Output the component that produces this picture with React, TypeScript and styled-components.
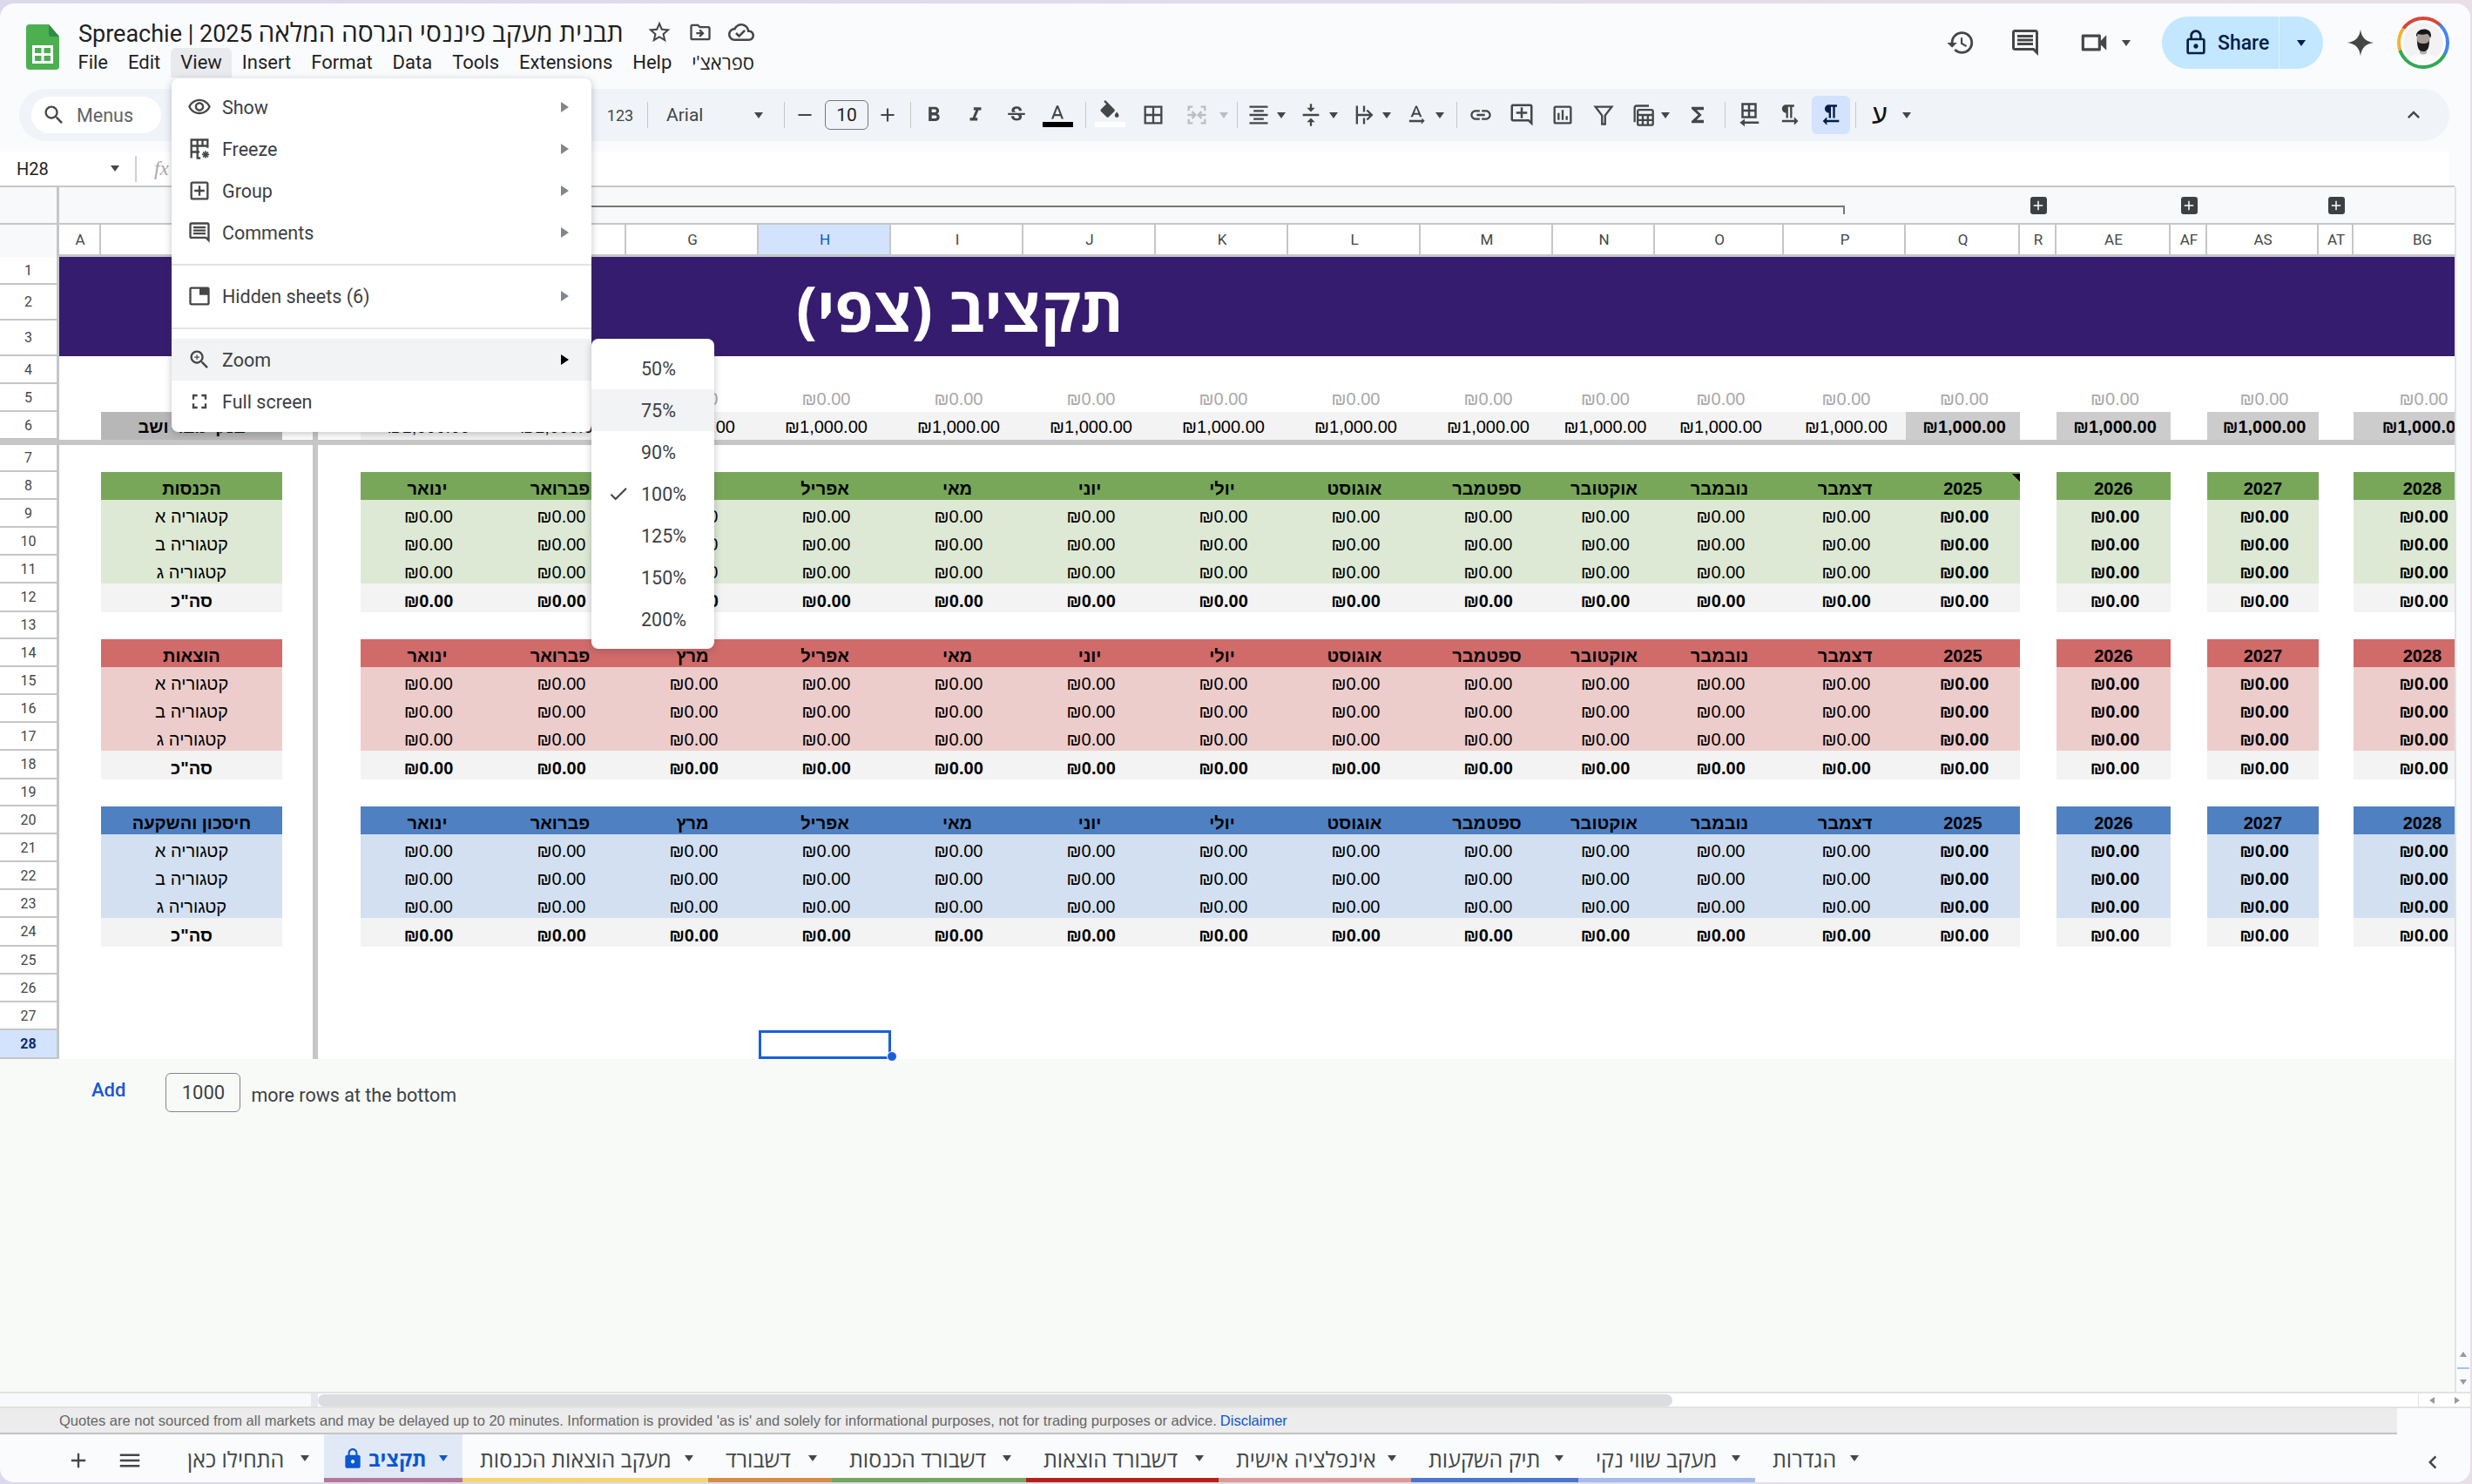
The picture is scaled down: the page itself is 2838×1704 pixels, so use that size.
import React from "react"
import styled, { createGlobalStyle } from "styled-components"

const UI_FONT = `Roboto, "Open Sans", "Liberation Sans", sans-serif`
const SHEET_FONT = `"Liberation Sans", Arial, sans-serif`
const GRID_LINE = "#c4c7c5"
const ICON_DARK = "#444746"

const GlobalStyle = createGlobalStyle`
	html, body {
		margin: 0;
		padding: 0;
		width: 2838px;
		height: 1704px;
		overflow: hidden;
		background: linear-gradient(90deg, #dcd9ec 0%, #e2dcea 55%, #e9dfe6 100%);
		font-family: ${UI_FONT};
	}
	* {
		box-sizing: border-box;
	}
`

const Shell = styled.div`
	width: 2838px;
	height: 1704px;
	padding: 4px 2px 2px 0;
`
const Window = styled.div`
	position: relative;
	height: 1698px;
	display: flex;
	flex-direction: column;
	background: #f9fbfd;
	border-radius: 16px;
	overflow: hidden;
`

/* header */
const Header = styled.header`
	height: 98px;
	flex: none;
	display: flex;
	padding-top: 17px;
`
const LogoSlot = styled.div`
	width: 90px;
	flex: none;
	padding: 7px 0 0 30px;
`
const TitleStack = styled.div`
	display: flex;
	flex-direction: column;
`
const TitleRow = styled.div`
	height: 34px;
	padding-bottom: 3px;
	display: flex;
	align-items: center;
`
const DocTitle = styled.div`
	font-size: 27px;
	color: #1f1f1f;
	white-space: nowrap;
	margin-right: 18px;
`
const TitleHebrew = styled.span`
	font-size: 29.9px;
`
const TitleIcon = styled.div`
	width: 47px;
	display: flex;
	justify-content: center;
`
const MenuBar = styled.nav`
	height: 34px;
	display: flex;
	margin-left: -12px;
`
const MenuItem = styled.div<{ $open?: boolean }>`
	height: 34px;
	padding: 0 11.5px 2px;
	display: flex;
	align-items: center;
	font-size: 22px;
	color: #1f1f1f;
	border-radius: 6px 6px 0 0;
	background: ${p => (p.$open ? "#e8eaed" : "transparent")};
`
const Actions = styled.div`
	margin-left: auto;
	padding-right: 24px;
	display: flex;
	height: 60px;
	margin-top: -2px;
	align-items: center;
`
const ActionIcon = styled.div<{ $w: number }>`
	width: ${p => p.$w}px;
	display: flex;
	justify-content: center;
	align-items: center;
`
const VideoButton = styled.div`
	width: 120px;
	padding-left: 23px;
	display: flex;
	align-items: center;
	gap: 13px;
`
const SharePill = styled.div`
	width: 185px;
	height: 60px;
	display: flex;
	border-radius: 30px;
	background: #c2e7ff;
	color: #041e49;
`
const ShareMain = styled.div`
	width: 135px;
	padding-left: 23px;
	display: flex;
	align-items: center;
	gap: 9px;
	font-size: 23px;
	font-weight: 500;
	border-right: 1px solid #e3f3ff;
`
const ShareCaret = styled.div`
	flex: 1;
	display: flex;
	justify-content: center;
	align-items: center;
`
const AvatarRing = styled.div`
	width: 60px;
	height: 60px;
	padding: 4px;
	border-radius: 50%;
	background: conic-gradient(#db4437 0 12%, #4285f4 12% 33%, #34a853 33% 70%, #f5b133 70% 85%, #db4437 85% 100%);
`
const AvatarFace = styled.div`
	width: 52px;
	height: 52px;
	border-radius: 50%;
	border: 3px solid #fff;
	background: #f2f2f2;
	overflow: hidden;
`

/* toolbar */
const Toolbar = styled.div`
	height: 60px;
	flex: none;
	margin: 0 24px 0 22px;
	padding-left: 14px;
	display: flex;
	align-items: center;
	background: #f0f4f9;
	border-radius: 30px;
`
const SearchPill = styled.div`
	width: 149px;
	height: 42px;
	flex: none;
	padding-left: 12px;
	display: flex;
	align-items: center;
	gap: 12px;
	background: #fff;
	border-radius: 21px;
	font-size: 21.5px;
	color: #5f6368;
`
const HiddenTools = styled.div`
	width: 506px;
	flex: none;
`
const Tool = styled.div<{ $w: number; $active?: boolean; $pt?: number }>`
	width: ${p => p.$w}px;
	height: 44px;
	flex: none;
	padding-top: ${p => p.$pt || 0}px;
	display: flex;
	align-items: ${p => (p.$pt ? "flex-start" : "center")};
	justify-content: center;
	position: relative;
	border-radius: 6px;
	background: ${p => (p.$active ? "#d3e3fd" : "transparent")};
	color: ${ICON_DARK};
`
const CaretTool = styled.div<{ $w: number; $pl: number; $gap: number }>`
	width: ${p => p.$w}px;
	height: 44px;
	flex: none;
	padding-left: ${p => p.$pl}px;
	display: flex;
	align-items: center;
	gap: ${p => p.$gap}px;
`
const ToolSep = styled.div<{ $w: number }>`
	width: ${p => p.$w}px;
	flex: none;
	display: flex;
	justify-content: center;
	&::after {
		content: "";
		width: 1px;
		height: 30px;
		background: #c7c7c7;
	}
`
const FormatLabel = styled.span`
	font-size: 18px;
	color: ${ICON_DARK};
`
const FontPicker = styled.div`
	width: 132px;
	flex: none;
	padding: 0 9px 0 12px;
	display: flex;
	justify-content: space-between;
	align-items: center;
	font-size: 21px;
	color: ${ICON_DARK};
`
const FontSizeBox = styled.div`
	width: 50px;
	height: 34px;
	flex: none;
	margin-left: 14px;
	display: flex;
	align-items: center;
	justify-content: center;
	border: 1px solid #747775;
	border-radius: 6px;
	font-size: 21px;
	color: #1f1f1f;
`
const ColorBar = styled.span<{ $color: string }>`
	position: absolute;
	left: 50%;
	bottom: 8px;
	width: 35px;
	height: 6px;
	margin-left: -17px;
	background: ${p => p.$color};
`
const DirectionGlyph = styled.span`
	width: 28px;
	text-align: center;
	font-family: ${SHEET_FONT};
	font-size: 31px;
	color: #111;
`
const Collapse = styled(Tool)`
	margin-left: auto;
	margin-right: 21px;
`

/* formula bar */
const FormulaBar = styled.div`
	width: 2812px;
	height: 41px;
	flex: none;
	margin-top: 12px;
	padding: 0 0 2px 19px;
	display: flex;
	align-items: center;
	background: #fff;
`
const NameBox = styled.div`
	width: 118px;
	display: flex;
	justify-content: space-between;
	align-items: center;
	font-size: 20px;
	color: #1f1f1f;
`
const FormulaSep = styled.div`
	width: 2px;
	height: 30px;
	margin: 0 20px 0 18px;
	background: #d0d0d0;
`
const FxMark = styled.span`
	font-family: "Liberation Serif", serif;
	font-style: italic;
	font-size: 23px;
	color: #a8a8a8;
`

/* sheet */
const Workspace = styled.div`
	height: 1383px;
	flex: none;
	display: flex;
`
const SheetColumn = styled.div`
	width: 2818px;
	flex: none;
	display: flex;
	flex-direction: column;
`
const SheetGrid = styled.div<{ $cols: string; $rows: string }>`
	height: 1003px;
	flex: none;
	display: grid;
	grid-template-columns: ${p => p.$cols};
	grid-template-rows: ${p => p.$rows};
	overflow-x: clip;
	background: #f8f9fa;
	border-top: 2px solid ${GRID_LINE};
	margin-top: -2px;
	font-family: ${SHEET_FONT};
`
const Corner = styled.div<{ $line?: boolean }>`
	background: #f8f9fa;
	border-right: 3px solid ${GRID_LINE};
	border-bottom: ${p => (p.$line ? `2px solid ${GRID_LINE}` : "none")};
`
const GroupFill = styled.div<{ $span: number }>`
	grid-column: span ${p => p.$span};
	background: #f8f9fa;
	border-bottom: 2px solid ${GRID_LINE};
	display: flex;
	justify-content: center;
	align-items: center;
`
const GroupBracket = styled.div`
	grid-column: span 11;
	background: #f8f9fa;
	border-bottom: 2px solid ${GRID_LINE};
	padding: 21px 70px 0 0;
`
const BracketLine = styled.div`
	height: 10px;
	border-top: 2px solid #777;
	border-right: 2px solid #777;
`
const GroupPlus = styled.div`
	width: 19px;
	height: 20px;
	display: flex;
	align-items: center;
	justify-content: center;
	border-radius: 3px;
	background: #3c4043;
`
const ColHead = styled.div<{ $active?: boolean }>`
	display: flex;
	align-items: center;
	justify-content: center;
	padding-left: 2px;
	font-family: ${UI_FONT};
	font-size: 17px;
	color: ${p => (p.$active ? "#0b57d0" : "#444746")};
	background: ${p => (p.$active ? "#d3e3fd" : "#fff")};
	border-right: 2px solid ${GRID_LINE};
	border-bottom: 3px solid ${GRID_LINE};
	overflow: hidden;
`
const RowHead = styled.div<{ $active?: boolean }>`
	display: flex;
	align-items: center;
	justify-content: center;
	font-family: ${UI_FONT};
	font-size: 16px;
	font-weight: ${p => (p.$active ? 700 : 400)};
	color: ${p => (p.$active ? "#0b2b6e" : "#444746")};
	background: ${p => (p.$active ? "#d3e3fd" : "#fff")};
	border-right: 3px solid ${GRID_LINE};
	border-bottom: 2px solid ${GRID_LINE};
`
const Banner = styled.div`
	grid-column: 2 / -1;
	grid-row: span 3;
	padding-left: 846px;
	display: flex;
	align-items: center;
	background: #351c6e;
`
const BannerText = styled.span`
	font-family: "Open Sans", "Liberation Sans", sans-serif;
	font-size: 71px;
	font-weight: 700;
	color: #fff;
	white-space: nowrap;
	line-height: 1;
	padding-top: 2px;
`
const FreezeBar = styled.div`
	grid-column: 1 / -1;
	background: #c6c6c6;
`
const Cell = styled.div<{ $bg?: string; $bold?: boolean; $color?: string; $freeze?: boolean; $num?: boolean; $up?: boolean }>`
	position: relative;
	padding: 0 0 ${p => (p.$up ? 2 : 0)}px ${p => (p.$num ? 3 : 0)}px;
	display: flex;
	align-items: flex-end;
	justify-content: center;
	white-space: nowrap;
	overflow: hidden;
	font-size: 20px;
	line-height: 26px;
	font-weight: ${p => (p.$bold ? 700 : 400)};
	color: ${p => p.$color || "#000"};
	background: ${p => p.$bg || "#fff"};
	border-right: ${p => (p.$freeze ? `6px solid #c6c6c6` : "none")};
`
const NoteMark = styled.span`
	position: absolute;
	top: 2px;
	right: 0;
	border-style: solid;
	border-width: 0 9px 9px 0;
	border-color: transparent #000 transparent transparent;
`
const SelectedCell = styled.div`
	position: relative;
	z-index: 2;
	background: #fff;
	border: 3px solid #1a5fd8;
`
const FillHandle = styled.span`
	position: absolute;
	right: -10px;
	bottom: -6px;
	width: 12px;
	height: 12px;
	border-radius: 50%;
	background: #1a5fd8;
	border: 1px solid #fff;
`
const AddRows = styled.div`
	flex: 1;
	padding: 16px 0 0 105px;
	display: flex;
	align-items: flex-start;
	background: #f8faf7;
	font-size: 21.5px;
`
const AddLink = styled.span`
	line-height: 40px;
	font-size: 22px;
	font-weight: 500;
	color: #1a56d6;
`
const AddCount = styled.div`
	width: 86px;
	height: 45px;
	margin-left: 46px;
	display: flex;
	align-items: center;
	justify-content: center;
	border: 1px solid #80868b;
	border-radius: 6px;
	font-size: 22px;
	color: #3c4043;
`
const AddHint = styled.span`
	margin-left: 12px;
	line-height: 52px;
	color: #3c4043;
`
const VScroll = styled.div`
	width: 18px;
	flex: none;
	display: flex;
	flex-direction: column;
	align-items: center;
	justify-content: flex-end;
	gap: 12px;
	padding-bottom: 8px;
	border-left: 2px solid #e1e3e1;
`
const VScrollMark = styled.div`
	width: 14px;
	height: 2px;
	background: #a8c0ef;
`
const ScrollRow = styled.div`
	height: 19px;
	flex: none;
	display: flex;
	background: #fff;
	border-top: 2px solid #e1e3e1;
	border-bottom: 2px solid #e1e3e1;
`
const FrozenScroll = styled.div`
	width: 365px;
	flex: none;
	background: #f8f9fa;
	border-right: 8px solid #e6e8ef;
`
const ScrollTrack = styled.div`
	flex: 1;
	padding-top: 1px;
`
const ScrollThumb = styled.div`
	width: 1555px;
	height: 14px;
	border-radius: 7px;
	background: #dadce0;
`
const ScrollArrows = styled.div`
	width: 60px;
	flex: none;
	display: flex;
	align-items: center;
	justify-content: space-around;
	border-left: 1px solid #e1e3e1;
`

/* quotes and tabs */
const QuoteBar = styled.div`
	width: 2752px;
	height: 30px;
	flex: none;
	padding-left: 68px;
	display: flex;
	align-items: center;
	gap: 4px;
	background: #ececec;
	border-bottom: 2px solid #c4c4c4;
	font-family: ${SHEET_FONT};
	font-size: 16.5px;
	color: #666;
	white-space: nowrap;
`
const QuoteLink = styled.span`
	color: #1155cc;
`
const TabBar = styled.div`
	height: 55px;
	flex: none;
	display: flex;
	align-items: stretch;
`
const TabTool = styled.div<{ $w: number; $pl?: number }>`
	width: ${p => p.$w}px;
	flex: none;
	padding: 5px 0 0 ${p => p.$pl || 0}px;
	display: flex;
	align-items: center;
	justify-content: center;
`
const Tab = styled.div<{ $w: number; $strip?: string; $active?: boolean; $pl?: number }>`
	width: ${p => p.$w}px;
	flex: none;
	padding: 5px 17px 0 ${p => p.$pl || 20}px;
	display: flex;
	align-items: center;
	justify-content: space-between;
	font-family: "Open Sans", "Liberation Sans", sans-serif;
	font-size: ${p => (p.$active ? 23.5 : 25)}px;
	font-weight: ${p => (p.$active ? 700 : 400)};
	white-space: nowrap;
	color: ${p => (p.$active ? "#0b57d0" : "#444746")};
	background: ${p => (p.$active ? "#e1e9f7" : "transparent")};
	border-bottom: 5px solid ${p => p.$strip || "transparent"};
`
const TabLabel = styled.span`
	display: flex;
	align-items: center;
	gap: 5px;
`
const TabChevron = styled.div`
	margin-left: auto;
	margin-right: 28px;
	display: flex;
	align-items: center;
	padding-top: 8px;
`

/* view menu */
const MenuPanel = styled.div`
	position: absolute;
	top: 86px;
	left: 197px;
	width: 482px;
	padding: 9px 0 11px;
	background: #fff;
	border-radius: 8px;
	box-shadow: 0 2px 8px rgba(60, 64, 67, 0.3);
	z-index: 5;
`
const MenuRow = styled.div<{ $hover?: boolean }>`
	position: relative;
	height: 48px;
	padding: 0 26px 0 18px;
	display: flex;
	align-items: center;
	gap: 12px;
	font-size: 21.5px;
	color: #3c4043;
	background: ${p => (p.$hover ? "#f1f3f4" : "transparent")};
`
const MenuDivider = styled.div`
	height: 2px;
	margin: 11.5px 0;
	background: #e3e3e3;
`
const MenuArrow = styled.span<{ $dark?: boolean }>`
	margin-left: auto;
	border-style: solid;
	border-width: 6px 0 6px 9px;
	border-color: transparent transparent transparent ${p => (p.$dark ? "#000" : "#80868b")};
`
const SubMenu = styled.div`
	position: absolute;
	top: 0;
	left: 100%;
	width: 141px;
	padding: 10px 0;
	background: #fff;
	border-radius: 8px;
	box-shadow: 0 2px 8px rgba(60, 64, 67, 0.3);
`
const SubRow = styled.div<{ $hover?: boolean }>`
	height: 48px;
	display: flex;
	align-items: center;
	font-size: 21.5px;
	color: #3c4043;
	background: ${p => (p.$hover ? "#f1f3f4" : "transparent")};
`
const CheckSlot = styled.div`
	width: 57px;
	padding-left: 18px;
	display: flex;
	align-items: center;
`
const Caret = styled.span<{ $color?: string; $muted?: boolean }>`
	flex: none;
	width: 0;
	height: 0;
	border-style: solid;
	border-width: 7px 5.5px 0 5.5px;
	border-color: ${p => (p.$muted ? "#bdbdbd" : p.$color || ICON_DARK)} transparent transparent transparent;
`
const ScrollNub = styled.span<{ $dir: "up" | "down" | "left" | "right" }>`
	width: 0;
	height: 0;
	border-style: solid;
	border-color: transparent;
	${p => (p.$dir === "up" ? "border-width: 0 4px 6px; border-bottom-color: #999;" : "")}
	${p => (p.$dir === "down" ? "border-width: 6px 4px 0; border-top-color: #999;" : "")}
	${p => (p.$dir === "left" ? "border-width: 4px 6px 4px 0; border-right-color: #999;" : "")}
	${p => (p.$dir === "right" ? "border-width: 4px 0 4px 6px; border-left-color: #999;" : "")}
`
const Glyph = styled.svg<{ $color?: string }>`
	flex: none;
	display: block;
	fill: ${p => p.$color || ICON_DARK};
`
const StrokeGlyph = styled.svg<{ $color?: string }>`
	flex: none;
	display: block;
	fill: none;
	stroke: ${p => p.$color || ICON_DARK};
	stroke-width: 2;
`

const I = {
	star: "M22 9.24l-7.19-.62L12 2 9.19 8.63 2 9.24l5.46 4.73L5.82 21 12 17.27 18.18 21l-1.63-7.03L22 9.24zM12 15.4l-3.76 2.27 1-4.28-3.32-2.88 4.38-.38L12 6.1l1.71 4.04 4.38.38-3.32 2.88 1 4.28L12 15.4z",
	move: "M20 6h-8l-2-2H4c-1.1 0-2 .9-2 2v12c0 1.1.9 2 2 2h16c1.1 0 2-.9 2-2V8c0-1.1-.9-2-2-2zm0 12H4V6h5.17l2 2H20v10zm-8.01-9l-1.41 1.41L12.16 12H8v2h4.16l-1.59 1.59L11.99 17 16 13.01 11.99 9z",
	cloud: "M19.35 10.04C18.67 6.59 15.64 4 12 4 9.11 4 6.6 5.64 5.35 8.04 2.34 8.36 0 10.91 0 14c0 3.31 2.69 6 6 6h13c2.76 0 5-2.24 5-5 0-2.64-2.05-4.78-4.65-4.96zM19 18H6c-2.21 0-4-1.79-4-4 0-2.05 1.53-3.76 3.56-3.97l1.07-.11.5-.95C8.08 7.14 9.94 6 12 6c2.62 0 4.88 1.86 5.39 4.43l.3 1.5 1.53.11c1.56.1 2.78 1.41 2.78 2.96 0 1.65-1.35 3-3 3zm-9-3.82l-2.09-2.09L6.5 13.5 10 17l6.01-6.01-1.41-1.41z",
	search: "M15.5 14h-.79l-.28-.27C15.41 12.59 16 11.11 16 9.5 16 5.91 13.09 3 9.5 3S3 5.91 3 9.5 5.91 16 9.5 16c1.61 0 3.09-.59 4.23-1.57l.27.28v.79l5 4.99L20.49 19l-4.99-5zm-6 0C7.01 14 5 11.99 5 9.5S7.01 5 9.5 5 14 7.01 14 9.5 11.99 14 9.5 14z",
	history: "M13 3a9 9 0 0 0-9 9H1l3.89 3.89.07.14L9 12H6c0-3.87 3.13-7 7-7s7 3.13 7 7-3.13 7-7 7c-1.93 0-3.68-.79-4.94-2.06l-1.42 1.42A8.954 8.954 0 0 0 13 21a9 9 0 0 0 0-18zm-1 5v5l4.28 2.54.72-1.21-3.5-2.08V8H12z",
	comment: "M21.99 4c0-1.1-.89-2-1.99-2H4c-1.1 0-2 .9-2 2v12c0 1.1.9 2 2 2h14l4 4-.01-18zM20 4v13.17L18.83 16H4V4h16zM6 12h12v2H6zm0-3h12v2H6zm0-3h12v2H6z",
	video: "M15 8v8H5V8h10m1-2H4c-.55 0-1 .45-1 1v10c0 .55.45 1 1 1h12c.55 0 1-.45 1-1v-3.5l4 4v-11l-4 4V7c0-.55-.45-1-1-1z",
	lockOutline: "M18 8h-1V6c0-2.76-2.24-5-5-5S7 3.24 7 6v2H6c-1.1 0-2 .9-2 2v10c0 1.1.9 2 2 2h12c1.1 0 2-.9 2-2V10c0-1.1-.9-2-2-2zM9 6c0-1.66 1.34-3 3-3s3 1.34 3 3v2H9V6zm9 14H6V10h12v10zm-6-3c1.1 0 2-.9 2-2s-.9-2-2-2-2 .9-2 2 .9 2 2 2z",
	lock: "M18 8h-1V6c0-2.76-2.24-5-5-5S7 3.24 7 6v2H6c-1.1 0-2 .9-2 2v10c0 1.1.9 2 2 2h12c1.1 0 2-.9 2-2V10c0-1.1-.9-2-2-2zm-6 9c-1.1 0-2-.9-2-2s.9-2 2-2 2 .9 2 2-.9 2-2 2zm3.1-9H8.9V6c0-1.71 1.39-3.1 3.1-3.1 1.71 0 3.1 1.39 3.1 3.1v2z",
	spark: "M12 1C12.6 7.6 16.4 11.4 23 12 16.4 12.6 12.6 16.4 12 23 11.4 16.4 7.6 12.6 1 12 7.6 11.4 11.4 7.6 12 1z",
	bold: "M15.6 10.79c.97-.67 1.65-1.77 1.65-2.79 0-2.26-1.75-4-4-4H7v14h7.04c2.09 0 3.71-1.7 3.71-3.79 0-1.52-.86-2.82-2.15-3.42zM10 6.5h3c.83 0 1.5.67 1.5 1.5s-.67 1.5-1.5 1.5h-3v-3zm3.5 9H10v-3h3.5c.83 0 1.5.67 1.5 1.5s-.67 1.5-1.5 1.5z",
	italic: "M10 4v3h2.21l-3.42 8H6v3h8v-3h-2.21l3.42-8H18V4z",
	strike: "M6.85 7.08C6.85 4.37 9.45 3 12.24 3c1.64 0 3 .49 3.9 1.28.77.65 1.46 1.73 1.46 3.24h-3.01c0-.31-.05-.59-.15-.85-.29-.86-1.2-1.28-2.25-1.28-1.86 0-2.34.98-2.34 1.7 0 .48.25.88.74 1.21.38.25.77.48 1.41.7H7.39c-.21-.34-.54-.89-.54-1.92zM21 12v-2H3v2h9.62c1.15.45 1.96.75 1.96 1.97 0 1-.81 1.67-2.28 1.67-1.54 0-2.93-.54-2.93-2.51H6.4c0 .55.08 1.13.24 1.58.81 2.29 3.29 3.3 5.67 3.3 2.27 0 5.3-.89 5.3-4.05 0-.3-.01-1.16-.48-1.94H21V12z",
	textA: "M11 3 5.500 17h2.250l1.120-3h6.250l1.120 3h2.250L13 3h-2zm-1.380 9L12 5.670 14.380 12H9.620z",
	fill: "M16.56 8.94L7.62 0 6.21 1.41l2.38 2.38-5.15 5.15c-.59.59-.59 1.54 0 2.12l5.5 5.5c.29.29.68.44 1.06.44s.77-.15 1.06-.44l5.5-5.5c.59-.58.59-1.53 0-2.12zM19 11.5s-2 2.17-2 3.5c0 1.1.9 2 2 2s2-.9 2-2c0-1.33-2-3.5-2-3.5z",
	borders: "M3 3v18h18V3H3zm8 16H5v-6h6v6zm0-8H5V5h6v6zm8 8h-6v-6h6v6zm0-8h-6V5h6v6z",
	merge: "M3 3h5v2H5v3H3V3zm13 0h5v5h-2V5h-3V3zM3 16h2v3h3v2H3v-5zm16 0h2v5h-5v-2h3v-3zM3 11h5.200L6.600 9.400 8 8l4 4-4 4-1.400-1.400 1.600-1.600H3v-2zm18 2h-5.200l1.600 1.600L16 16l-4-4 4-4 1.400 1.400-1.600 1.600H21v2z",
	alignCenter: "M7 15v2h10v-2H7zm-4 6h18v-2H3v2zm0-8h18v-2H3v2zm4-6v2h10V7H7zM3 3v2h18V3H3z",
	valign: "M8 19h3v4h2v-4h3l-4-4-4 4zm8-14h-3V1h-2v4H8l4 4 4-4zM4 11v2h16v-2H4z",
	wrap: "M4 3h2v18H4zM11 3h2v6h-2zM11 15h2v6h-2zM6 11h11.200l-3-3L15.600 6.600 21 12l-5.400 5.400-1.400-1.400 3-3H6z",
	rotate: "M12.75 3h-1.5L6.5 14h2.1l.9-2.2h5l.9 2.2h2.1L12.75 3zm-2.62 7L12 4.98 13.87 10h-3.74zm10.37 8l-3-3v2H5v2h12v2l3-3z",
	link: "M3.9 12c0-1.71 1.39-3.1 3.1-3.1h4V7H7c-2.76 0-5 2.24-5 5s2.24 5 5 5h4v-1.9H7c-1.71 0-3.1-1.39-3.1-3.1zM8 13h8v-2H8v2zm9-6h-4v1.9h4c1.71 0 3.1 1.39 3.1 3.1s-1.39 3.1-3.1 3.1h-4V17h4c2.76 0 5-2.24 5-5s-2.24-5-5-5z",
	addComment: "M22 4c0-1.1-.9-2-2-2H4c-1.1 0-2 .9-2 2v12c0 1.1.9 2 2 2h14l4 4V4zm-2 13.17L18.83 16H4V4h16v13.17zM13 5h-2v4H7v2h4v4h2v-4h4V9h-4z",
	chart: "M19 3H5c-1.1 0-2 .9-2 2v14c0 1.1.9 2 2 2h14c1.1 0 2-.9 2-2V5c0-1.1-.9-2-2-2zm0 16H5V5h14v14zM7 10h2v7H7zm4-3h2v10h-2zm4 6h2v4h-2z",
	sigma: "M18 4H6v2l6.5 6L6 18v2h12v-3h-7l5-5-5-5h7V4z",
	ltr: "M9 10v5h2V4h2v11h2V4h2V2H9C6.79 2 5 3.79 5 6s1.79 4 4 4zm12 8l-4-4v3H5v2h12v3l4-4z",
	rtl: "M10 10v5h2V4h2v11h2V4h2V2h-8C7.79 2 6 3.79 6 6s1.79 4 4 4zm-2 7v-3l-4 4 4 4v-3h12v-2H8z",
	eye: "M12 6c3.79 0 7.17 2.13 8.82 5.5C19.17 14.87 15.79 17 12 17s-7.17-2.13-8.82-5.5C4.83 8.13 8.21 6 12 6m0-2C7 4 2.73 7.11 1 11.5 2.73 15.89 7 19 12 19s9.27-3.11 11-7.5C21.27 7.11 17 4 12 4zm0 5c1.38 0 2.5 1.12 2.5 2.5S13.38 14 12 14s-2.5-1.12-2.5-2.5S10.62 9 12 9m0-2c-2.48 0-4.5 2.02-4.5 4.5S9.52 16 12 16s4.5-2.02 4.5-4.5S14.48 7 12 7z",
	group: "M19 3H5c-1.1 0-2 .9-2 2v14c0 1.1.9 2 2 2h14c1.1 0 2-.9 2-2V5c0-1.1-.9-2-2-2zm0 16H5V5h14v14zM11 7h2v4h4v2h-4v4h-2v-4H7v-2h4z",
	sheets: "M4 3h16a2 2 0 0 1 2 2v14a2 2 0 0 1-2 2H4a2 2 0 0 1-2-2V5a2 2 0 0 1 2-2zm0 2v14h16v-8h-8V5H4z",
	zoomIn: "M15.5 14h-.79l-.28-.27C15.41 12.59 16 11.11 16 9.5 16 5.91 13.09 3 9.5 3S3 5.91 3 9.5 5.91 16 9.5 16c1.61 0 3.09-.59 4.23-1.57l.27.28v.79l5 4.99L20.49 19l-4.99-5zm-6 0C7.01 14 5 11.99 5 9.5S7.01 5 9.5 5 14 7.01 14 9.5 11.99 14 9.5 14zm.5-7H9v2H7v1h2v2h1v-2h2V9h-2z",
	fullscreen: "M7 14H5v5h5v-2H7v-3zm-2-4h2V7h3V5H5v5zm12 7h-3v2h5v-5h-2v3zM14 5v2h3v3h2V5h-5z",
	check: "M9 16.2 4.8 12l-1.4 1.4L9 19 21 7l-1.4-1.4z",
	plus: "M19 13h-6v6h-2v-6H5v-2h6V5h2v6h6v2z",
	minus: "M19 13H5v-2h14v2z",
	menu: "M3 18h18v-2H3v2zm0-5h18v-2H3v2zm0-7v2h18V6H3z",
	up: "M7.41 15.41 12 10.83l4.59 4.58L18 14l-6-6-6 6z",
	back: "M15.41 7.41 14 6l-6 6 6 6 1.41-1.41L10.83 12z"
}

const Icon = ({ d, size = 28, color }: { d: string; size?: number; color?: string }) => (
	<Glyph viewBox="0 0 24 24" width={size} height={size} $color={color}>
		<path d={d} />
	</Glyph>
)

const FreezeIcon = ({ size = 28 }: { size?: number }) => (
	<StrokeGlyph viewBox="0 0 24 24" width={size} height={size}>
		<path d="M4 21V3h16v8M4 9h16M4 15h8M10 3v18h3M15 3v6" />
		<path d="M14.5 17.5h7M18 14v7M15.5 15l5 5M20.5 15l-5 5" strokeWidth="1.4" />
	</StrokeGlyph>
)
const FilterIcon = () => (
	<StrokeGlyph viewBox="0 0 24 24" width={28} height={28}>
		<path d="M4 4h16l-6.5 8.5V21h-3v-8.500z" />
	</StrokeGlyph>
)
const PivotIcon = () => (
	<StrokeGlyph viewBox="0 0 24 24" width={28} height={28}>
		<path d="M4 19V5a2 2 0 0 1 2-2h12" />
		<rect x="7" y="7" width="15" height="15" rx="1.500" />
		<path d="M7 12h15M7 17h15M12 12v10M17 12v10" />
	</StrokeGlyph>
)
const SheetDirectionIcon = () => (
	<Glyph viewBox="0 0 24 24" width={30} height={30}>
		<path d="M5 1h14v14H5V1zm2 2v4h4V3H7zm6 0v4h4V3h-4zM7 9v4h4V9H7zm6 0v4h4V9h-4z" />
		<path d="M8 18v-2.500L3.500 19 8 22.500V20h13v-2z" />
	</Glyph>
)
const SheetsLogo = () => (
	<svg viewBox="0 0 38 52" width={38} height={52}>
		<path d="M4 0h22l12 14v34a4 4 0 0 1-4 4H4a4 4 0 0 1-4-4V4a4 4 0 0 1 4-4z" fill="#4caf50" />
		<path d="M26 0l12 14H28a2 2 0 0 1-2-2z" fill="#2e8b47" />
		<path d="M7 24h24v21H7V24zm3 3v6h7.500v-6H10zm10.500 0v6H28v-6h-7.500zM10 36v6h7.500v-6H10zm10.500 0v6H28v-6h-7.500z" fill="#fff" fillRule="evenodd" />
	</svg>
)
const Portrait = () => (
	<svg viewBox="0 0 46 46" width={46} height={46}>
		<path d="M5 46c2-8 10-11 18-11s16 3 18 11z" fill="#fbfbfb" />
		<path d="M19 27h8v8c-2 2-6 2-8 0z" fill="#b5b0ac" />
		<ellipse cx="23" cy="19" rx="7.500" ry="10" fill="#a89f98" />
		<path d="M15 16c-1-10 17-12 17-1l-1 3c-1-3-2-5-4-5-3 1-7 1-10 0-1 1-1 3-2 3z" fill="#161616" />
		<path d="M16 20c0 11 3 13 7 13s7-2 7-13c-1 3-3 4-7 4s-6-1-7-4z" fill="#1d1d1d" />
	</svg>
)

const MONTHS = ["ינואר", "פברואר", "מרץ", "אפריל", "מאי", "יוני", "יולי", "אוגוסט", "ספטמבר", "אוקטובר", "נובמבר", "דצמבר"]
const YEAR_COLS: Record<string, string> = { Q: "2025", AE: "2026", AS: "2027", BG: "2028" }
const MONTH_COLS = ["E", "F", "G", "H", "I", "J", "K", "L", "M", "N", "O", "P"]

const COLUMNS: [string, number][] = [
	["", 68], ["A", 48], ["B", 208], ["C", 41], ["D", 49], ["E", 153], ["F", 152], ["G", 152], ["H", 152],
	["I", 152], ["J", 152], ["K", 152], ["L", 152], ["M", 152], ["N", 117], ["O", 148], ["P", 140],
	["Q", 131], ["R", 42], ["AE", 131], ["AF", 42], ["AS", 128], ["AT", 40], ["BG", 158]
]
const ROW_HEIGHTS = [
	32, 41, 41, 32, 32, 32, 31, 32, 32, 32, 32, 33, 31, 32, 32, 32, 32, 33, 31, 32, 32, 32, 32, 33, 32, 32, 32, 33
]
const gridCols = COLUMNS.map(c => `${c[1]}px`).join(" ")
const gridRows = [43, 37, ...ROW_HEIGHTS.slice(0, 6), 6, ...ROW_HEIGHTS.slice(6)].map(h => `${h}px`).join(" ")

const SECTIONS = [
	{ start: 8, title: "הכנסות", head: "#78a75a", body: "#dde9d5" },
	{ start: 14, title: "הוצאות", head: "#d06b69", body: "#edcdcb" },
	{ start: 20, title: "חיסכון והשקעה", head: "#4f81c2", body: "#d3e0f1" }
]
const CATEGORIES = ["קטגוריה א", "קטגוריה ב", "קטגוריה ג"]
const TOTAL_BG = "#f3f3f3"

function sheetCell(row: number, col: string) {
	const isMonth = MONTH_COLS.includes(col)
	const isYear = col in YEAR_COLS
	const key = `${row}-${col}`
	const freeze = col === "C"

	if (row === 28 && col === "H") {
		return (
			<SelectedCell key={key}>
				<FillHandle />
			</SelectedCell>
		)
	}
	if (row === 5 && (isMonth || isYear)) {
		return <Cell key={key} $color="#a8a8a8" $num $up>₪0.00</Cell>
	}
	if (row === 6) {
		if (col === "B") return <Cell key={key} $bg="#b7b7b7" $bold $up>בנק עובר ושב</Cell>
		if (isMonth) return <Cell key={key} $bg={TOTAL_BG} $num $up>₪1,000.00</Cell>
		if (isYear) return <Cell key={key} $bg="#cccccc" $bold $num $up>₪1,000.00</Cell>
	}
	const section = SECTIONS.find(s => row >= s.start && row <= s.start + 4)
	if (section) {
		const offset = row - section.start
		if (offset === 0) {
			if (col === "B") return <Cell key={key} $bg={section.head} $bold>{section.title}</Cell>
			if (isMonth) return <Cell key={key} $bg={section.head} $bold>{MONTHS[MONTH_COLS.indexOf(col)]}</Cell>
			if (isYear) {
				return (
					<Cell key={key} $bg={section.head} $bold>
						{YEAR_COLS[col]}
						{row === 8 && col === "Q" && <NoteMark />}
					</Cell>
				)
			}
		} else if (offset === 4) {
			if (col === "B") return <Cell key={key} $bg={TOTAL_BG} $bold>סה"כ</Cell>
			if (isMonth || isYear) return <Cell key={key} $bg={TOTAL_BG} $bold $num>₪0.00</Cell>
		} else {
			if (col === "B") return <Cell key={key} $bg={section.body}>{CATEGORIES[offset - 1]}</Cell>
			if (isMonth) return <Cell key={key} $bg={section.body} $num>₪0.00</Cell>
			if (isYear) return <Cell key={key} $bg={section.body} $bold $num>₪0.00</Cell>
		}
	}
	return <Cell key={key} $freeze={freeze} />
}

function sheetRow(row: number) {
	const head = (
		<RowHead key={`h-${row}`} $active={row === 28}>
			{row}
		</RowHead>
	)
	if (row === 1) {
		return [
			head,
			<Banner key="banner">
				<BannerText dir="rtl">תקציב (צפי)</BannerText>
			</Banner>
		]
	}
	if (row === 2 || row === 3) return [head]
	return [head, ...COLUMNS.slice(1).map(c => sheetCell(row, c[0]))]
}

const TABS = [
	{ name: "מעקב הוצאות הכנסות", w: 282, strip: "#f6d56f" },
	{ name: "דשבורד", w: 142, strip: "#d68c44" },
	{ name: "דשבורד הכנסות", w: 223, strip: "#76a659" },
	{ name: "דשבורד הוצאות", w: 221, strip: "#b62218" },
	{ name: "אינפלציה אישית", w: 221, strip: "#dd9a96" },
	{ name: "תיק השקעות", w: 192, strip: "#4a76cc" },
	{ name: "מעקב שווי נקי", w: 203, strip: "#a4bced" },
	{ name: "הגדרות", w: 136 }
]
const MENU_LABELS = ["File", "Edit", "View", "Insert", "Format", "Data", "Tools", "Extensions", "Help", "ספראצ'י"]
const ZOOM_LEVELS = ["50%", "75%", "90%", "100%", "125%", "150%", "200%"]

function Top() {
	return (
		<Header>
			<LogoSlot>
				<SheetsLogo />
			</LogoSlot>
			<TitleStack>
				<TitleRow>
					<DocTitle>Spreachie | 2025 <TitleHebrew>תבנית מעקב פיננסי הגרסה המלאה</TitleHebrew></DocTitle>
					<TitleIcon><Icon d={I.star} size={30} /></TitleIcon>
					<TitleIcon><Icon d={I.move} size={28} /></TitleIcon>
					<TitleIcon><Icon d={I.cloud} size={30} /></TitleIcon>
				</TitleRow>
				<MenuBar>
					{MENU_LABELS.map(m => (
						<MenuItem key={m} $open={m === "View"}>{m}</MenuItem>
					))}
				</MenuBar>
			</TitleStack>
			<Actions>
				<ActionIcon $w={74}><Icon d={I.history} size={34} /></ActionIcon>
				<ActionIcon $w={74}><Icon d={I.comment} size={36} /></ActionIcon>
				<VideoButton>
					<Icon d={I.video} size={38} />
					<Caret />
				</VideoButton>
				<SharePill>
					<ShareMain>
						<Icon d={I.lockOutline} size={32} color="#041e49" />
						Share
					</ShareMain>
					<ShareCaret><Caret $color="#041e49" /></ShareCaret>
				</SharePill>
				<ActionIcon $w={85}><Icon d={I.spark} size={34} /></ActionIcon>
				<AvatarRing>
					<AvatarFace><Portrait /></AvatarFace>
				</AvatarRing>
			</Actions>
		</Header>
	)
}

function Tools() {
	return (
		<Toolbar>
			<SearchPill>
				<Icon d={I.search} size={28} />
				Menus
			</SearchPill>
			<HiddenTools />
			<Tool $w={42}><FormatLabel>123</FormatLabel></Tool>
			<ToolSep $w={20} />
			<FontPicker>Arial<Caret /></FontPicker>
			<ToolSep $w={30} />
			<Tool $w={18}><Icon d={I.minus} size={26} /></Tool>
			<FontSizeBox>10</FontSizeBox>
			<Tool $w={44}><Icon d={I.plus} size={26} /></Tool>
			<ToolSep $w={8} />
			<Tool $w={46}><Icon d={I.bold} size={28} /></Tool>
			<Tool $w={50}><Icon d={I.italic} size={26} /></Tool>
			<Tool $w={44}><Icon d={I.strike} size={26} /></Tool>
			<Tool $w={50} $pt={8}>
				<Icon d={I.textA} size={26} />
				<ColorBar $color="#000" />
			</Tool>
			<ToolSep $w={14} />
			<Tool $w={42} $pt={5}>
				<Icon d={I.fill} size={28} />
				<ColorBar $color="#fff" />
			</Tool>
			<Tool $w={58}><Icon d={I.borders} size={28} /></Tool>
			<CaretTool $w={62} $pl={7} $gap={12}>
				<Icon d={I.merge} color="#bdbdbd" />
				<Caret $muted />
			</CaretTool>
			<ToolSep $w={10} />
			<CaretTool $w={60} $pl={6} $gap={7}><Icon d={I.alignCenter} /><Caret /></CaretTool>
			<CaretTool $w={61} $pl={6} $gap={7}><Icon d={I.valign} /><Caret /></CaretTool>
			<CaretTool $w={60} $pl={6} $gap={7}><Icon d={I.wrap} /><Caret /></CaretTool>
			<CaretTool $w={60} $pl={6} $gap={8}><Icon d={I.rotate} /><Caret /></CaretTool>
			<ToolSep $w={12} />
			<Tool $w={44}><Icon d={I.link} /></Tool>
			<Tool $w={50}><Icon d={I.addComment} size={30} /></Tool>
			<Tool $w={44}><Icon d={I.chart} /></Tool>
			<Tool $w={50}><FilterIcon /></Tool>
			<CaretTool $w={60} $pl={6} $gap={7}><PivotIcon /><Caret /></CaretTool>
			<Tool $w={46}><Icon d={I.sigma} /></Tool>
			<ToolSep $w={16} />
			<Tool $w={40}><SheetDirectionIcon /></Tool>
			<Tool $w={52}><Icon d={I.ltr} size={28} /></Tool>
			<Tool $w={44} $active><Icon d={I.rtl} size={28} color="#041e49" /></Tool>
			<ToolSep $w={12} />
			<CaretTool $w={64} $pl={8} $gap={12}>
				<DirectionGlyph>ע</DirectionGlyph>
				<Caret />
			</CaretTool>
			<Collapse $w={40}><Icon d={I.up} size={28} /></Collapse>
		</Toolbar>
	)
}

function Grid() {
	return (
		<SheetGrid $cols={gridCols} $rows={gridRows}>
			<Corner $line />
			<GroupFill $span={5} />
			<GroupBracket><BracketLine /></GroupBracket>
			<GroupFill $span={1} />
			{["R", "AE", "AF", "AS", "AT", "BG"].map(c => (
				<GroupFill key={c} $span={1}>
					{(c === "R" || c === "AF" || c === "AT") && (
						<GroupPlus><Icon d={I.plus} size={18} color="#fff" /></GroupPlus>
					)}
				</GroupFill>
			))}
			<Corner />
			{COLUMNS.slice(1).map(c => (
				<ColHead key={c[0]} $active={c[0] === "H"}>{c[0]}</ColHead>
			))}
			{[1, 2, 3, 4, 5, 6].map(sheetRow)}
			<FreezeBar />
			{Array.from({ length: 22 }, (_, i) => sheetRow(i + 7))}
		</SheetGrid>
	)
}

function ViewMenu() {
	return (
		<MenuPanel>
			<MenuRow><Icon d={I.eye} />Show<MenuArrow /></MenuRow>
			<MenuRow><FreezeIcon />Freeze<MenuArrow /></MenuRow>
			<MenuRow><Icon d={I.group} />Group<MenuArrow /></MenuRow>
			<MenuRow><Icon d={I.comment} />Comments<MenuArrow /></MenuRow>
			<MenuDivider />
			<MenuRow><Icon d={I.sheets} />Hidden sheets (6)<MenuArrow /></MenuRow>
			<MenuDivider />
			<MenuRow $hover>
				<Icon d={I.zoomIn} />
				Zoom
				<MenuArrow $dark />
				<SubMenu>
					{ZOOM_LEVELS.map(z => (
						<SubRow key={z} $hover={z === "75%"}>
							<CheckSlot>{z === "100%" && <Icon d={I.check} size={26} />}</CheckSlot>
							{z}
						</SubRow>
					))}
				</SubMenu>
			</MenuRow>
			<MenuRow><Icon d={I.fullscreen} />Full screen</MenuRow>
		</MenuPanel>
	)
}

export default function App() {
	return (
		<>
			<GlobalStyle />
			<Shell>
				<Window>
					<Top />
					<Tools />
					<FormulaBar>
						<NameBox>H28<Caret /></NameBox>
						<FormulaSep />
						<FxMark>fx</FxMark>
					</FormulaBar>
					<Workspace>
						<SheetColumn>
							<Grid />
							<AddRows>
								<AddLink>Add</AddLink>
								<AddCount>1000</AddCount>
								<AddHint>more rows at the bottom</AddHint>
							</AddRows>
						</SheetColumn>
						<VScroll>
							<ScrollNub $dir="up" />
							<VScrollMark />
							<ScrollNub $dir="down" />
						</VScroll>
					</Workspace>
					<ScrollRow>
						<FrozenScroll />
						<ScrollTrack><ScrollThumb /></ScrollTrack>
						<ScrollArrows>
							<ScrollNub $dir="left" />
							<ScrollNub $dir="right" />
						</ScrollArrows>
					</ScrollRow>
					<QuoteBar>
						Quotes are not sourced from all markets and may be delayed up to 20 minutes. Information is provided 'as is' and solely for informational purposes, not for trading purposes or advice.
						<QuoteLink>Disclaimer</QuoteLink>
					</QuoteBar>
					<TabBar>
						<TabTool $w={120} $pl={60}><Icon d={I.plus} size={28} /></TabTool>
						<TabTool $w={58}><Icon d={I.menu} size={30} /></TabTool>
						<Tab $w={194} $pl={37}><TabLabel>התחילו כאן</TabLabel><Caret /></Tab>
						<Tab $w={159} $strip="#b4789c" $active>
							<TabLabel><Icon d={I.lock} size={26} color="#0b57d0" />תקציב</TabLabel>
							<Caret $color="#0b57d0" />
						</Tab>
						{TABS.map(t => (
							<Tab key={t.name} $w={t.w} $strip={t.strip}>
								<TabLabel>{t.name}</TabLabel>
								<Caret />
							</Tab>
						))}
						<TabChevron><Icon d={I.back} size={30} /></TabChevron>
					</TabBar>
					<ViewMenu />
				</Window>
			</Shell>
		</>
	)
}
